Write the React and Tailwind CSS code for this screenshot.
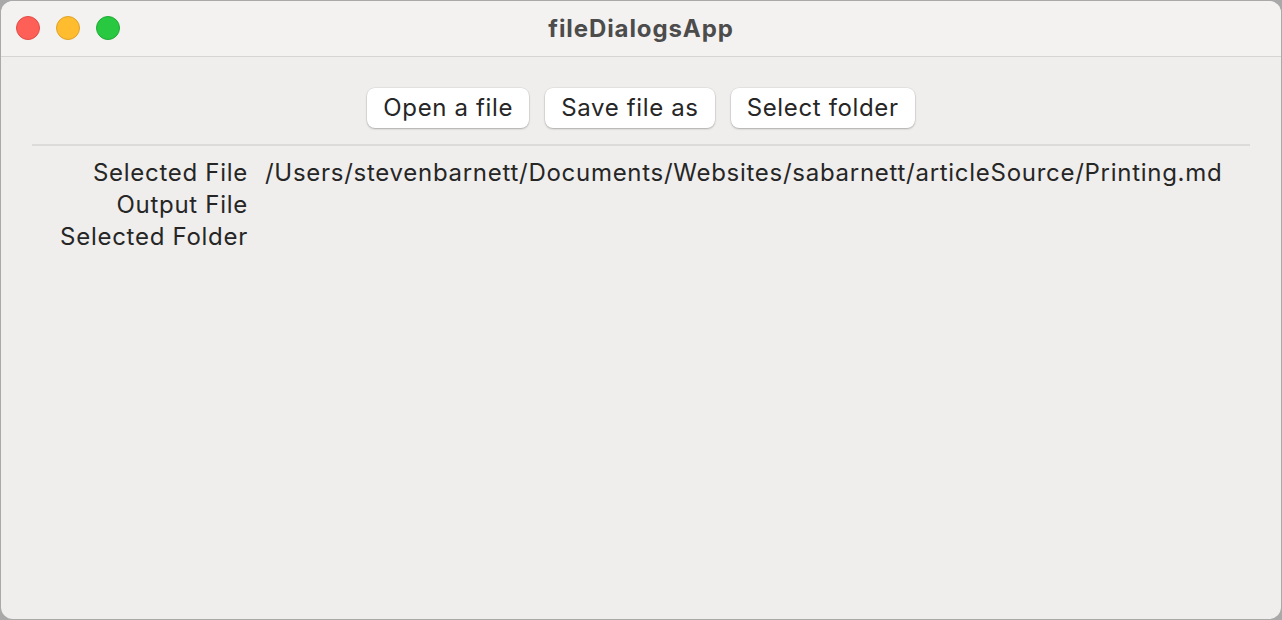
export default function App() {
  const rows = [
    { label: 'Selected File', value: '/Users/stevenbarnett/Documents/Websites/sabarnett/articleSource/Printing.md' },
    { label: 'Output File', value: '' },
    { label: 'Selected Folder', value: '' },
  ];

  return (
    <div className="h-[620px] w-[1282px] bg-[#a9a9a9] p-px" style={{ fontFamily: 'Inter, "Noto Sans", sans-serif' }}>
      <div className="flex h-full flex-col overflow-hidden rounded-[12px] bg-[#efeeec]">
        {/* title bar */}
        <div className="relative flex h-[56px] shrink-0 items-center justify-center border-b border-[#d6d5d3] bg-[#f3f2f0]">
          <div className="absolute left-[15px] top-[15px] flex gap-[16px]">
            <span className="h-[24px] w-[24px] rounded-full border border-[#e24b45] bg-[#fe5f57]"></span>
            <span className="h-[24px] w-[24px] rounded-full border border-[#e0a228] bg-[#febc2e]"></span>
            <span className="h-[24px] w-[24px] rounded-full border border-[#1fab35] bg-[#28c840]"></span>
          </div>
          <h1 className="text-[24px] font-bold tracking-[0.9px] text-[#4c4c4c]">fileDialogsApp</h1>
        </div>

        {/* toolbar */}
        <div className="flex justify-center gap-[16px] pt-[31px]">
          {['Open a file', 'Save file as', 'Select folder'].map((t) => (
            <button
              key={t}
              type="button"
              className="h-[40px] rounded-[8px] bg-white px-[16px] text-[24px] tracking-[0.65px] text-[#262626] shadow-[0_1px_2px_rgba(0,0,0,0.25),0_0_0_0.5px_rgba(0,0,0,0.08)]"
            >
              {t}
            </button>
          ))}
        </div>

        <div className="mx-[31px] mt-[16px] border-t-2 border-[#dcdbd9]"></div>

        {/* details */}
        <div className="mt-[11px] grid grid-cols-[216px_1fr] gap-x-[17px] pl-[31px] text-[24px] leading-[32px] tracking-[0.72px] text-[#262626]">
          {rows.map((r) => (
            <div key={r.label} className="contents">
              <div className="text-right">{r.label}</div>
              <div className="h-[32px] whitespace-nowrap">{r.value}</div>
            </div>
          ))}
        </div>
      </div>
    </div>
  );
}
